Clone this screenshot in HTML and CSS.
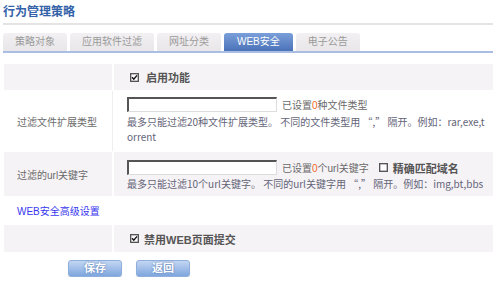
FILE: index.html
```html
<!DOCTYPE html>
<html lang="zh-CN">
<head>
<meta charset="utf-8">
<title>行为管理策略</title>
<link rel="stylesheet" href="styles.css">
</head>
<body>
<div class="page">
  <h1 class="title">行为管理策略</h1>

  <div class="tabs">
    <span class="tab">策略对象</span>
    <span class="tab">应用软件过滤</span>
    <span class="tab">网址分类</span>
    <span class="tab active">WEB安全</span>
    <span class="tab">电子公告</span>
  </div>

  <div class="form">
    <div class="row shade r-enable">
      <div class="cell label"></div>
      <div class="cell field">
        <label class="check bold">
          <svg class="box" viewBox="0 0 10 10" width="10" height="10"><rect x="0.75" y="0.75" width="8.5" height="8.5" fill="#fff" stroke="#555" stroke-width="1.5"/><path d="M2.3 4.8 L4.2 6.9 L7.8 2.6" fill="none" stroke="#111" stroke-width="1.6"/></svg>
          启用功能
        </label>
      </div>
    </div>

    <div class="row plain r-ext">
      <div class="cell label">过滤文件扩展类型</div>
      <div class="cell field stack">
        <div class="line">
          <span class="input"></span>
          <span class="note">已设置<em class="num">0</em>种文件类型</span>
        </div>
        <div class="hint wrap">最多只能过滤20种文件扩展类型。 不同的文件类型用 “,” 隔开。例如：rar,exe,torrent</div>
      </div>
    </div>

    <div class="row shade r-url">
      <div class="cell label">过滤的url关键字</div>
      <div class="cell field stack">
        <div class="line">
          <span class="input"></span>
          <span class="note">已设置<em class="num">0</em>个url关键字</span>
          <label class="check bold exact">
            <svg class="box" viewBox="0 0 10 10" width="10" height="10"><rect x="0.75" y="0.75" width="8.5" height="8.5" fill="#fff" stroke="#555" stroke-width="1.5"/></svg>
            精确匹配域名
          </label>
        </div>
        <div class="hint">最多只能过滤10个url关键字。 不同的url关键字用 “,” 隔开。例如：img,bt,bbs</div>
      </div>
    </div>

    <div class="row-link">
      <a class="adv" href="#">WEB安全高级设置</a>
    </div>

    <div class="row shade r-post">
      <div class="cell label"></div>
      <div class="cell field">
        <label class="check bold post">
          <svg class="box" viewBox="0 0 10 10" width="10" height="10"><rect x="0.75" y="0.75" width="8.5" height="8.5" fill="#fff" stroke="#555" stroke-width="1.5"/><path d="M2.3 4.8 L4.2 6.9 L7.8 2.6" fill="none" stroke="#111" stroke-width="1.6"/></svg>
          禁用WEB页面提交
        </label>
      </div>
    </div>
  </div>

  <div class="actions">
    <button class="btn" type="button">保存</button>
    <button class="btn" type="button">返回</button>
  </div>
</div>
</body>
</html>
```

FILE: styles.css
```css
html, body {
  margin: 0;
  padding: 0;
  background: #fff;
}

body {
  font-family: "Liberation Sans", Arial, "Noto Sans CJK SC", sans-serif;
  font-size: 10px;
  color: #666;
}

.page {
  width: 490px;
  padding: 0 0 0 3px;
}

.title {
  margin: 0;
  height: 23px;
  line-height: 24px;
  font-size: 12px;
  font-weight: bold;
  color: #3462a8;
  border-bottom: 2px solid #e4e4e4;
}

.tabs {
  display: flex;
  gap: 3px;
  margin-top: 8px;
  height: 18px;
  border-bottom: 2px solid #aabde3;
}

.tab {
  padding: 0 12px;
  height: 18px;
  line-height: 18px;
  border-radius: 3px 3px 0 0;
  background: linear-gradient(#f2f0f2, #e8e6e8);
  color: #9a9a9a;
  font-size: 10px;
}

.tab:first-child {
  width: 40px;
}

.tab.active {
  background: linear-gradient(#7a9fda, #4b72b8);
  color: #fff;
  padding: 0 13px;
}

.form {
  margin-top: 11px;
  margin-left: 1px;
  display: flex;
  flex-direction: column;
  gap: 1px;
}

.row {
  display: grid;
  grid-template-columns: 108px 1fr;
  column-gap: 2px;
}

.row.shade .cell {
  background: #f6f3f6;
}

.row.plain .label {
  border-right: 1px solid #f1eef1;
  margin-right: -1px;
}

.r-enable { height: 26px; }
.r-ext { height: 60px; }
.r-url { height: 44px; }
.r-post { height: 27px; }

.cell {
  display: flex;
  align-items: center;
}

.label {
  padding-left: 13px;
  color: #6a6a6a;
}

.field {
  padding-left: 13px;
  padding-right: 4px;
}

.field.stack {
  flex-direction: column;
  align-items: flex-start;
  justify-content: flex-start;
}

.r-ext .field.stack { padding-top: 6px; }
.r-url .field.stack { padding-top: 8px; }

.line {
  display: flex;
  align-items: center;
  height: 15px;
}

.input {
  display: inline-block;
  box-sizing: border-box;
  width: 150px;
  height: 15px;
  background: #fff;
  border-style: solid;
  border-width: 2px 1px 1px 2px;
  border-color: #555 #ddd #ddd #555;
}

.note {
  margin-left: 5px;
  color: #6a6a6a;
}

.num {
  font-style: normal;
  color: #f26a1f;
}

.hint {
  margin-top: 1px;
  line-height: 15px;
  color: #646478;
  font-family: "Noto Sans CJK SC", sans-serif;
}

.r-ext .hint { margin-top: 2px; }

.hint.wrap {
  word-break: break-all;
}

.check {
  display: inline-flex;
  align-items: center;
  gap: 7px;
  margin-left: 3px;
  color: #555;
}

.check.post {
  gap: 5px;
}

.check.exact {
  margin-left: 10px;
  gap: 5px;
}

.bold {
  font-size: 11px;
  font-weight: bold;
}

.box {
  display: block;
  width: 9px;
  height: 9px;
}

.row-link {
  height: 27px;
  display: flex;
  align-items: center;
  padding-left: 13px;
}

.adv {
  color: #3838f0;
  text-decoration: none;
  font-size: 10px;
}

.actions {
  display: flex;
  gap: 14px;
  margin-top: 8px;
  padding-left: 65px;
}

.btn {
  width: 54px;
  height: 17px;
  padding: 0;
  border: 1px solid #8eaedb;
  border-radius: 3px;
  background: linear-gradient(#c3d6f2, #7fa6de);
  color: #fff;
  font-family: "Liberation Sans", Arial, "Noto Sans CJK SC", sans-serif;
  font-size: 11px;
  font-weight: bold;
  line-height: 15px;
  text-shadow: 0 0 2px #4a6ea8;
  box-shadow: 0 1px 1px rgba(0, 0, 0, 0.15);
}
```
